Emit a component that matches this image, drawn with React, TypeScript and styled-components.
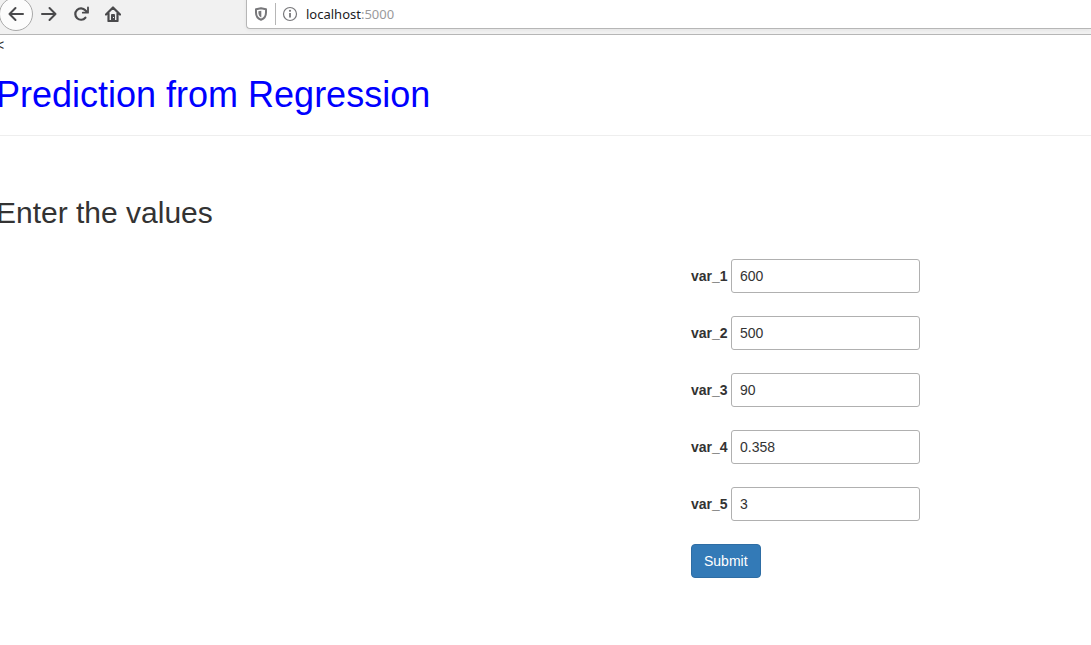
import React from "react";
import styled, { createGlobalStyle } from "styled-components";

const GlobalStyle = createGlobalStyle`
  *, *::before, *::after { box-sizing: border-box; }
  body {
    margin: 0;
    overflow-x: hidden;
    background: #fff;
    color: #333;
    font: 14px/20px "Liberation Sans", Arial, sans-serif;
  }
`;

const Toolbar = styled.header`
  display: flex;
  height: 35px;
  background: #f1f1f1;
  border-bottom: 1px solid #b6b6b6;
  overflow: hidden;
`;

const NavButtons = styled.nav`
  display: flex;
  flex: none;
  width: 246px;
  height: 28px;
  align-items: center;
`;

const NavButton = styled.button<{ $round?: boolean }>`
  display: flex;
  flex: none;
  align-items: center;
  justify-content: center;
  width: ${(p) => (p.$round ? 34 : 32)}px;
  height: ${(p) => (p.$round ? 34 : 32)}px;
  margin-left: ${(p) => (p.$round ? -1 : 0)}px;
  padding: 0;
  border: ${(p) => (p.$round ? "1px solid #a9a9a9" : "none")};
  border-radius: 50%;
  background: ${(p) => (p.$round ? "#fcfcfc" : "transparent")};
  color: #4a4a4c;
`;

const AddressBar = styled.div`
  display: flex;
  flex: 1;
  align-items: center;
  height: 33px;
  margin-top: -4px;
  padding: 5px 0 3px 7px;
  border: 1px solid #b6b6b6;
  border-right: none;
  border-radius: 4px 0 0 4px;
  background: #fff;
  box-shadow: 0 1px 4px rgba(0, 0, 0, 0.06);
  color: #77777a;
`;

const Divider = styled.span`
  width: 1px;
  height: 22px;
  margin: 0 6px 0 7px;
  background: #b6b6b6;
`;

const Url = styled.span`
  margin-left: 8px;
  color: #9a9a9c;
  font: 13px/20px "Noto Sans", "Open Sans", sans-serif;
`;

const Host = styled.span`
  color: #1c1c1e;
`;

const Page = styled.main`
  margin-left: -4px;
`;

const PageHeader = styled.div`
  margin: 20px 0;
  padding-bottom: 20px;
  border-bottom: 1px solid #eee;
`;

const Title = styled.h1`
  margin: 0;
  color: #00f;
  font-size: 36px;
  font-weight: 400;
  line-height: 40px;
`;

const Subtitle = styled.h2`
  margin: 60px 0 30px;
  font-size: 30px;
  font-weight: 400;
  line-height: 33px;
`;

const Form = styled.form`
  display: flex;
  flex-direction: column;
  align-items: flex-start;
  gap: 23px;
  width: 229px;
  margin: 0 171px 0 auto;
`;

const Field = styled.div`
  display: flex;
  align-items: center;
  width: 100%;
`;

const Label = styled.label`
  flex: none;
  width: 40px;
  font-weight: 700;
`;

const TextInput = styled.input`
  flex: 1;
  min-width: 0;
  height: 34px;
  padding: 6px 8px;
  border: 1px solid #b0b0b0;
  border-radius: 3px;
  background: #fff;
  color: #333;
  font: inherit;
`;

const SubmitButton = styled.button`
  height: 34px;
  padding: 6px 12px;
  border: 1px solid #2e6da4;
  border-radius: 4px;
  background: #337ab7;
  color: #fff;
  font: inherit;
`;

const stroke = {
  fill: "none",
  stroke: "currentColor",
  strokeWidth: 2,
  strokeLinecap: "round" as const,
  strokeLinejoin: "round" as const,
};

const BackIcon = () => (
  <svg width="16" height="16" viewBox="0 0 16 16" {...stroke} aria-hidden="true">
    <path d="M15 8H1.5M7.5 2L1.5 8l6 6" />
  </svg>
);

const ForwardIcon = () => (
  <svg width="16" height="16" viewBox="0 0 16 16" {...stroke} aria-hidden="true">
    <path d="M1 8h13.5M8.500 2l6 6-6 6" />
  </svg>
);

const ReloadIcon = () => (
  <svg width="16" height="16" viewBox="0 0 16 16" {...stroke} aria-hidden="true">
    <path d="M12.400 11.700A5.700 5.700 0 1 1 12.300 4.300L13.500 5.500" strokeWidth="2.200" />
    <path d="M15 1.500v5.200H9.800" strokeWidth="1.800" />
  </svg>
);

const HomeIcon = () => (
  <svg width="16" height="16" viewBox="0 0 16 16" {...stroke} aria-hidden="true">
    <path d="M1 8.500L8 1.500l7 7M3.500 7.500V15h9V7.500" strokeWidth="2.200" />
    <path d="M6 15V9.300c0-.8.500-1.300 1.200-1.300h1.600c.7 0 1.200.5 1.200 1.300V15z" fill="currentColor" stroke="none" />
    <path d="M8.500 11v1" stroke="#f1f1f1" strokeWidth="1" strokeLinecap="butt" />
  </svg>
);

const ShieldIcon = () => (
  <svg width="14" height="14" viewBox="0 0 14 14" aria-hidden="true">
    <path
      d="M7 1.300L12 2.300V5.500C12 9.300 10 11.700 7 12.700C4 11.700 2 9.300 2 5.500V2.300Z"
      fill="none"
      stroke="currentColor"
      strokeWidth="2"
      strokeLinejoin="round"
    />
    <path d="M7.300 3.700v6.800C5.600 9.600 4.400 8 4.400 5.700V4.200z" fill="currentColor" />
  </svg>
);

const InfoIcon = () => (
  <svg width="16" height="16" viewBox="0 0 16 16" aria-hidden="true">
    <circle cx="8" cy="8" r="6.500" fill="none" stroke="currentColor" strokeWidth="1.200" />
    <path d="M8 7v4.500" stroke="currentColor" strokeWidth="1.800" />
    <circle cx="8" cy="4.800" r="1.100" fill="currentColor" />
  </svg>
);

const fields = [
  { name: "var_1", value: "600" },
  { name: "var_2", value: "500" },
  { name: "var_3", value: "90" },
  { name: "var_4", value: "0.358" },
  { name: "var_5", value: "3" },
];

export default function App() {
  return (
    <>
      <GlobalStyle />
      <Toolbar>
        <NavButtons aria-label="Browser">
          <NavButton $round type="button" aria-label="Back"><BackIcon /></NavButton>
          <NavButton type="button" aria-label="Forward"><ForwardIcon /></NavButton>
          <NavButton type="button" aria-label="Reload"><ReloadIcon /></NavButton>
          <NavButton type="button" aria-label="Home"><HomeIcon /></NavButton>
        </NavButtons>
        <AddressBar>
          <ShieldIcon />
          <Divider />
          <InfoIcon />
          <Url><Host>localhost</Host>:5000</Url>
        </AddressBar>
      </Toolbar>
      <Page>
        &lt;
        <PageHeader>
          <Title>Prediction from Regression</Title>
        </PageHeader>
        <Subtitle>Enter the values</Subtitle>
        <Form onSubmit={(e) => e.preventDefault()}>
          {fields.map((f) => (
            <Field key={f.name}>
              <Label htmlFor={f.name}>{f.name}</Label>
              <TextInput id={f.name} name={f.name} type="text" defaultValue={f.value} />
            </Field>
          ))}
          <SubmitButton type="submit">Submit</SubmitButton>
        </Form>
      </Page>
    </>
  );
}
